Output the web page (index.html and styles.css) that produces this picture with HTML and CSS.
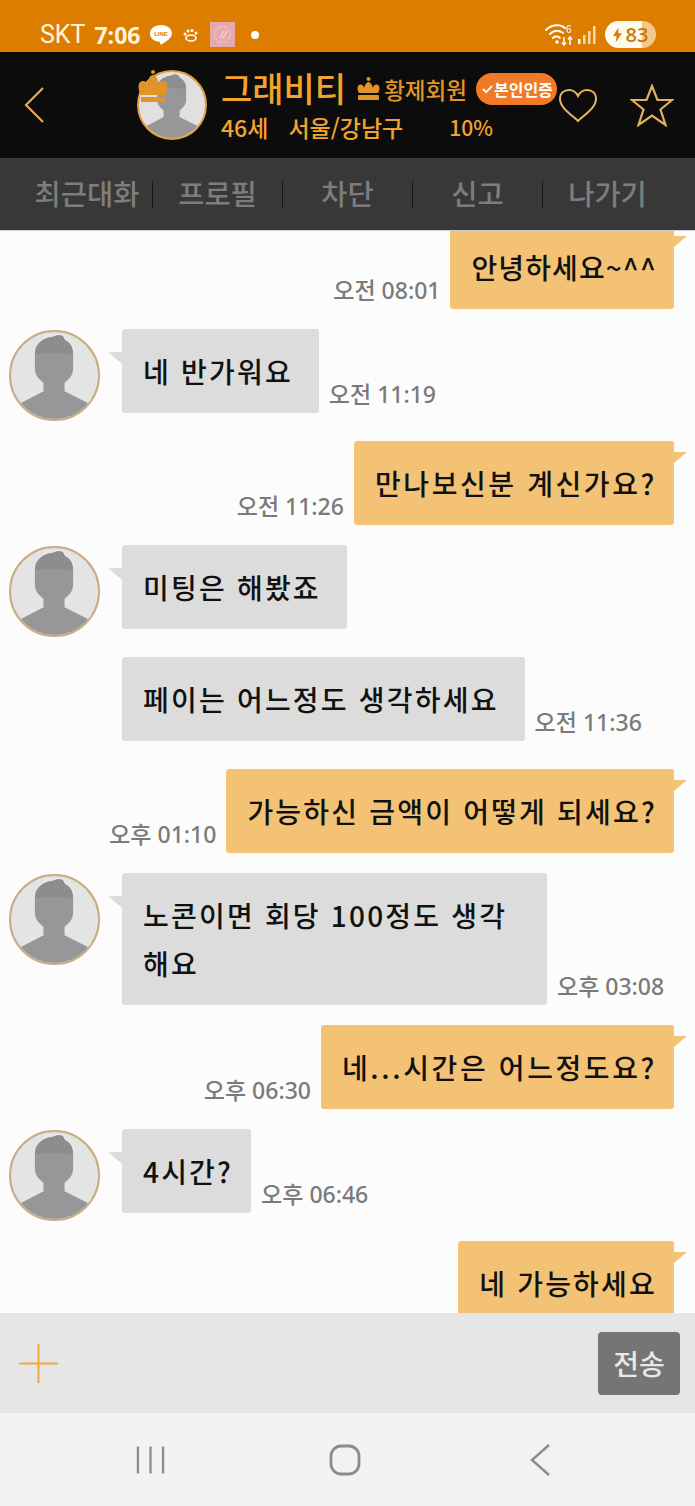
FILE: index.html
```html
<!DOCTYPE html>
<html lang="ko">
<head>
    <meta charset="UTF-8">
    <meta name="viewport" content="width=device-width, initial-scale=1.0">
    <title>그래비티</title>
    <link rel="stylesheet" href="styles.css">
</head>
<body>
    <svg class="defs" width="0" height="0">
        <symbol id="person" viewBox="0 0 91 91">
            <path d="M25 22C25 12 34 6 44 5C50 2 55 3 56 8C62 11 65 16 65 24V38C65 46 60 50 56 53V62L80 74V95H11V74L34 62V53C30 50 25 46 25 38Z" fill="#979797"/>
            <path d="M25 24C25 12 34 6 44 5C50 2 55 3 56 8C62 11 65 16 65 24C55 21 35 21 25 24Z" fill="#8d8d8d"/>
        </symbol>
    </svg>

    <div class="phone">
        <div class="status-bar">
            <span class="carrier">SKT</span>
            <span class="clock">7:06</span>
            <svg class="st-line" viewBox="0 0 24 22">
                <path d="M12 1C5.500 1 1 4.800 1 9.500C1 14 5 17.500 10.500 17.800L12 21C14 19 22.500 15.500 23 9.500C23 4.800 18.500 1 12 1Z" fill="#fff"/>
                <text x="12" y="12" text-anchor="middle" class="st-line-text">LINE</text>
            </svg>
            <svg class="st-paw" viewBox="0 0 16 14">
                <ellipse cx="8" cy="10" rx="5" ry="3" fill="none" stroke="#fff" stroke-width="1.600"/>
                <circle cx="2" cy="6" r="1.500" fill="#fff"/>
                <circle cx="5" cy="3" r="1.500" fill="#fff"/>
                <circle cx="9" cy="2.500" r="1.500" fill="#fff"/>
                <circle cx="13" cy="5" r="1.500" fill="#fff"/>
            </svg>
            <svg class="st-app" viewBox="0 0 25 25">
                <rect width="25" height="25" fill="#e5a9ae"/>
                <circle cx="12.500" cy="12.500" r="8" fill="none" stroke="#f3d9da" stroke-width="1" stroke-dasharray="2 1"/>
                <path d="M10 16L14 9M13 16L17 9" stroke="#f6e3e3" stroke-width="1"/>
            </svg>
            <span class="st-dot"></span>
            <svg class="st-wifi" viewBox="0 0 30 24">
                <g fill="none" stroke="#fff" stroke-width="2" stroke-linecap="round" stroke-dasharray="3 1.500">
                    <path d="M1 7C7 1 15 1 20 5"/>
                    <path d="M5 11C9 7 14 7 18 10"/>
                    <path d="M8 15C10 13 13 13 15 15"/>
                </g>
                <circle cx="12" cy="19" r="1.800" fill="#fff"/>
                <path d="M19 14V22M17 19.500L19 22L21 19.500M25 22V14M23 16.500L25 14L27 16.500" fill="none" stroke="#fff" stroke-width="1.500"/>
                <text x="21" y="10" class="st-wifi-text">6</text>
            </svg>
            <svg class="st-signal" viewBox="0 0 18 18">
                <rect x="0" y="13" width="2.500" height="5" fill="#fff"/>
                <rect x="5" y="9" width="2.500" height="9" fill="#fbd9a8"/>
                <rect x="10" y="5" width="2.500" height="13" fill="#fbd9a8"/>
                <rect x="15" y="0" width="2.500" height="18" fill="#fbd9a8"/>
            </svg>
            <div class="st-battery">
                <svg class="st-bolt" viewBox="0 0 10 16"><path d="M6 0L0 9H4L3 16L10 6H6Z" fill="#dd7d00"/></svg>
                <span>83</span>
            </div>
        </div>

        <header class="top-header">
            <svg class="back-icon" viewBox="0 0 20 36"><path d="M19 1L2 18L19 35" fill="none" stroke="#e3ac55" stroke-width="2.200"/></svg>
            <div class="profile-pic">
                <svg viewBox="0 0 91 91"><use href="#person"/></svg>
                <svg class="profile-crown" viewBox="0 0 30 35">
                    <circle cx="15" cy="2" r="2" fill="#e29427"/>
                    <path d="M3 25C-1 18 0 11 5 11C8 11 9 13 9 15C10 9 12 5 15 5C18 5 20 9 21 15C21 13 22 11 25 11C30 11 31 18 27 25Z" fill="#e29427"/>
                    <rect x="3" y="27" width="25" height="5" fill="#e29427"/>
                </svg>
            </div>
            <div class="profile-info">
                <div class="info-top">
                    <span class="name">그래비티</span>
                    <svg class="rank-crown" viewBox="0 0 23 24">
                        <circle cx="11.500" cy="2" r="2" fill="#e29427"/>
                        <path d="M2 16C-1 11 1 7 4 7.500C6 8 7 10 7 11C8 7 10 5 11.500 5C13 5 15 7 16 11C16 10 17 8 19 7.500C22 7 24 11 21 16Z" fill="#e29427"/>
                        <rect x="1" y="18" width="21" height="5" rx="1" fill="#e29427"/>
                    </svg>
                    <span class="rank">황제회원</span>
                    <span class="verified">
                        <svg viewBox="0 0 12 10"><path d="M1 5L4.500 8.500L11 1.500" fill="none" stroke="#fff" stroke-width="2"/></svg>본인인증
                    </span>
                </div>
                <div class="info-bottom">
                    <span>46세</span>
                    <span class="info-area">서울/강남구</span>
                    <span class="info-pct">10%</span>
                </div>
            </div>
            <svg class="heart-icon" viewBox="0 0 40 35"><path d="M20 33C14 27 2 20 2 11C2 5 6 2 11 2C15 2 18 4 20 8C22 4 25 2 29 2C34 2 38 5 38 11C38 20 26 27 20 33Z" fill="none" stroke="#e3b765" stroke-width="2"/></svg>
            <svg class="star-icon" viewBox="0 0 44 43"><path d="M22 2L27.500 16H42L30.500 25.500L35.500 41L22 31.500L8.500 41L13.500 25.500L2 16H16.500Z" fill="none" stroke="#e3b05c" stroke-width="2.200"/></svg>
        </header>

        <nav class="tabs">
            <span class="tab">최근대화</span>
            <span class="tab">프로필</span>
            <span class="tab">차단</span>
            <span class="tab">신고</span>
            <span class="tab">나가기</span>
        </nav>

        <main class="chat">
            <div class="row me first">
                <span class="time">오전 08:01</span>
                <div class="bubble tail tight">안녕하세요~^^</div>
            </div>
            <div class="row them">
                <div class="avatar"><svg viewBox="0 0 91 91"><use href="#person"/></svg></div>
                <div class="msg">
                    <div class="bubble tail">네 반가워요</div>
                    <span class="time">오전 11:19</span>
                </div>
            </div>
            <div class="row me">
                <span class="time">오전 11:26</span>
                <div class="bubble tail loose">만나보신분 계신가요?</div>
            </div>
            <div class="row them">
                <div class="avatar"><svg viewBox="0 0 91 91"><use href="#person"/></svg></div>
                <div class="msg">
                    <div class="bubble tail">미팅은 해봤죠</div>
                </div>
            </div>
            <div class="row them cont">
                <div class="msg">
                    <div class="bubble">페이는 어느정도 생각하세요</div>
                    <span class="time">오전 11:36</span>
                </div>
            </div>
            <div class="row me after-cont">
                <span class="time">오후 01:10</span>
                <div class="bubble tail">가능하신 금액이 어떻게 되세요?</div>
            </div>
            <div class="row them">
                <div class="avatar"><svg viewBox="0 0 91 91"><use href="#person"/></svg></div>
                <div class="msg">
                    <div class="bubble tail wide">노콘이면 회당 100정도 생각해요</div>
                    <span class="time">오후 03:08</span>
                </div>
            </div>
            <div class="row me">
                <span class="time">오후 06:30</span>
                <div class="bubble tail loose">네...시간은 어느정도요?</div>
            </div>
            <div class="row them">
                <div class="avatar"><svg viewBox="0 0 91 91"><use href="#person"/></svg></div>
                <div class="msg">
                    <div class="bubble tail short">4시간?</div>
                    <span class="time">오후 06:46</span>
                </div>
            </div>
            <div class="row me">
                <div class="bubble tail">네 가능하세요</div>
            </div>
        </main>

        <div class="input-bar">
            <svg class="plus-icon" viewBox="0 0 40 40"><path d="M20 0V40M0 20H40" stroke="#eda93c" stroke-width="2"/></svg>
            <button class="send-btn">전송</button>
        </div>

        <div class="nav-bar">
            <svg class="nav-recent" viewBox="0 0 30 28"><path d="M2 0V28M15 0V28M28 0V28" stroke="#8c8c8c" stroke-width="2.400"/></svg>
            <svg class="nav-home" viewBox="0 0 32 32"><rect x="2" y="2" width="28" height="28" rx="10" fill="none" stroke="#8c8c8c" stroke-width="2.800"/></svg>
            <svg class="nav-back" viewBox="0 0 20 32"><path d="M19 1L2 16L19 31" fill="none" stroke="#8c8c8c" stroke-width="2.400"/></svg>
        </div>
    </div>
</body>
</html>
```

FILE: styles.css
```css
* {
    box-sizing: border-box;
}
body {
    margin: 0;
    font-family: "Noto Sans CJK KR", "Noto Sans", sans-serif;
    overflow: hidden;
}
.defs {
    position: absolute;
}
.phone {
    display: flex;
    flex-direction: column;
    width: 695px;
    height: 1506px;
    background-color: #fcfcfc;
}

/* status bar */
.status-bar {
    display: flex;
    align-items: center;
    flex: none;
    height: 52px;
    padding: 17px 0 0 40px;
    background-color: #dd7d00;
    color: #fff3df;
}
.carrier {
    font-family: Roboto, sans-serif;
    font-size: 25px;
}
.clock {
    margin-left: 9px;
    font-family: "Open Sans", sans-serif;
    font-size: 23px;
    font-weight: 700;
}
.st-line {
    width: 24px;
    height: 22px;
    margin-left: 9px;
}
.st-line-text {
    font-family: "Liberation Sans", sans-serif;
    font-size: 6px;
    font-weight: 700;
    fill: #dd7d00;
}
.st-paw {
    width: 16px;
    height: 14px;
    margin-left: 10px;
}
.st-app {
    width: 25px;
    height: 25px;
    margin-left: 11px;
}
.st-dot {
    width: 8px;
    height: 8px;
    margin-left: 16px;
    border-radius: 50%;
    background-color: #fff;
}
.st-wifi {
    width: 30px;
    height: 24px;
    margin-left: 286px;
}
.st-wifi-text {
    font-family: "Liberation Sans", sans-serif;
    font-size: 10px;
    fill: #fff;
}
.st-signal {
    width: 18px;
    height: 18px;
    margin-left: 3px;
}
.st-battery {
    display: flex;
    align-items: center;
    gap: 3px;
    width: 51px;
    height: 27px;
    margin-left: 9px;
    padding-left: 8px;
    border-radius: 14px;
    background: linear-gradient(90deg, #fffaf0 0, #fffaf0 72%, #f3c98a 72%);
    color: #c9790a;
    font-family: "Open Sans", sans-serif;
    font-size: 20px;
    font-weight: 600;
    line-height: 1;
}
.st-bolt {
    flex: none;
    width: 9px;
    height: 16px;
}

/* header */
.top-header {
    display: flex;
    flex: none;
    height: 106px;
    padding: 18px 21px 0 24px;
    background-color: #0c0c0c;
}
.back-icon {
    width: 20px;
    height: 36px;
    margin: 17px 93px 0 0;
}
.profile-pic {
    position: relative;
    flex: none;
    width: 70px;
    height: 70px;
    border: 2px solid #e0a040;
    border-radius: 50%;
    background-color: #e0e0e0;
}
.profile-pic > svg:first-child {
    display: block;
    width: 66px;
    height: 66px;
    border-radius: 50%;
}
.profile-crown {
    position: absolute;
    top: -2px;
    left: -1px;
    width: 30px;
    height: 35px;
}
.profile-info {
    flex: 1;
    margin-left: 14px;
    color: #f3a32c;
}
.info-top {
    display: flex;
    align-items: center;
    height: 38px;
}
.name {
    margin-bottom: 2px;
    font-size: 34px;
    font-weight: 500;
    line-height: 38px;
    white-space: nowrap;
}
.rank-crown {
    flex: none;
    width: 23px;
    height: 24px;
    margin-left: 11px;
}
.rank {
    margin-left: 4px;
    color: #e29427;
    font-size: 22.500px;
    font-weight: 500;
    white-space: nowrap;
}
.verified {
    display: flex;
    flex: none;
    align-items: center;
    gap: 1px;
    width: 81px;
    height: 32px;
    margin: 0 0 0 9px;
    padding-left: 6px;
    border-radius: 16px;
    background-color: #f07a28;
    color: #fff;
    font-size: 16px;
    font-weight: 700;
    white-space: nowrap;
}
.verified svg {
    flex: none;
    width: 11px;
    height: 10px;
}
.info-bottom {
    display: flex;
    margin-top: 3px;
    font-size: 23px;
    font-weight: 500;
    line-height: 32px;
}
.info-area {
    margin-left: 20px;
}
.info-pct {
    margin-left: 46px;
    font-size: 21px;
}
.heart-icon {
    flex: none;
    width: 40px;
    height: 35px;
    margin-top: 18px;
}
.star-icon {
    flex: none;
    width: 44px;
    height: 43px;
    margin: 14px 0 0 32px;
}

/* tabs */
.tabs {
    display: grid;
    grid-template-columns: repeat(5, 130px);
    align-items: center;
    flex: none;
    height: 72px;
    padding-left: 22px;
    background-color: #383838;
}
.tab {
    height: 27px;
    color: #7d7d7d;
    font-size: 28.500px;
    font-weight: 500;
    line-height: 24px;
    text-align: center;
    white-space: nowrap;
}
.tab + .tab {
    border-left: 1px solid #161616;
}

/* chat */
.chat {
    flex: 1;
    min-height: 0;
    overflow: hidden;
    border-top: 1px solid #cfcfcf;
}
.row {
    display: flex;
    align-items: flex-start;
    margin-top: 20px;
}
.row.first {
    margin-top: -6px;
}
.row.after-cont {
    margin-top: 28px;
}
.row.me {
    justify-content: flex-end;
    padding-right: 21px;
}
.row.them {
    padding-left: 9px;
}
.row.cont {
    padding-left: 122px;
}
.msg {
    display: flex;
    align-items: flex-end;
}
.avatar {
    flex: none;
    width: 91px;
    height: 91px;
    margin: 1px 22px 0 0;
    overflow: hidden;
    border: 2px solid #cbab82;
    border-radius: 50%;
    background-color: #e4e4e4;
}
.avatar svg {
    display: block;
    width: 100%;
    height: 100%;
}
.bubble {
    position: relative;
    flex: none;
    padding: 18px 26px 18px 21px;
    border-radius: 3px;
    background-color: #dcdcdc;
    color: #111;
    font-size: 28px;
    font-weight: 500;
    letter-spacing: 2.200px;
    line-height: 48px;
    white-space: nowrap;
}
.bubble.wide {
    width: 425px;
    white-space: normal;
}
.bubble.short {
    padding-right: 18px;
}
.bubble.tight {
    letter-spacing: 1.100px;
}
.bubble.loose {
    letter-spacing: 2.600px;
}
.me .bubble {
    padding-right: 17px;
    background-color: #f3c274;
}
.them .tail::before {
    content: "";
    position: absolute;
    top: 23px;
    left: -14px;
    border-top: 12px solid #dcdcdc;
    border-left: 14px solid transparent;
}
.me .tail::after {
    content: "";
    position: absolute;
    top: 11px;
    right: -13px;
    border-top: 11px solid #f3c274;
    border-right: 13px solid transparent;
}
.time {
    flex: none;
    align-self: flex-end;
    margin: 0 10px 4px 10px;
    color: #7a7a7a;
    font-family: "Noto Sans", "Noto Sans CJK KR", sans-serif;
    font-size: 23px;
    font-weight: 500;
    line-height: 30px;
    white-space: nowrap;
}

/* input */
.input-bar {
    display: flex;
    align-items: center;
    justify-content: space-between;
    flex: none;
    height: 100px;
    padding: 0 15px 0 19px;
    background-color: #e6e6e6;
}
.plus-icon {
    width: 39px;
    height: 39px;
}
.send-btn {
    width: 82px;
    height: 63px;
    padding: 0;
    border: none;
    border-radius: 4px;
    background-color: #757575;
    color: #e8e8e8;
    font-family: inherit;
    font-size: 28px;
    font-weight: 500;
}

/* android nav */
.nav-bar {
    display: flex;
    align-items: center;
    flex: none;
    height: 93px;
    padding: 0 0 0 136px;
    background-color: #f2f2f4;
}
.nav-recent {
    width: 29px;
    height: 28px;
}
.nav-home {
    width: 32px;
    height: 32px;
    margin-left: 164px;
}
.nav-back {
    width: 20px;
    height: 32px;
    margin-left: 169px;
}
```
